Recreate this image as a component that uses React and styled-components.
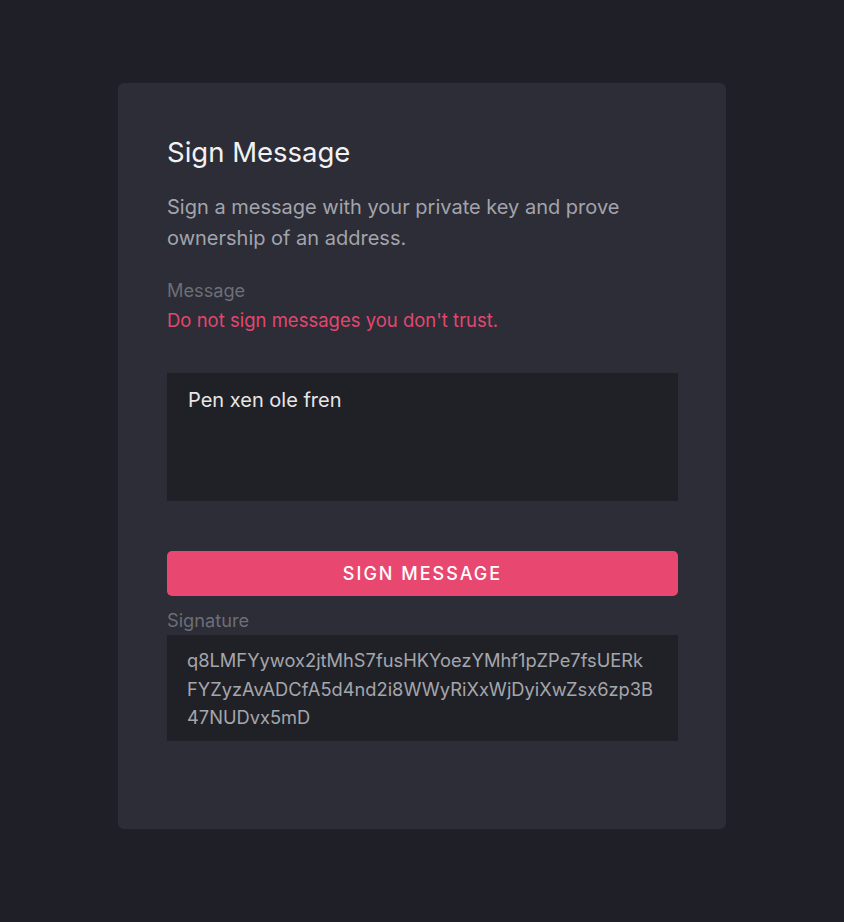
import styled, { createGlobalStyle } from 'styled-components';

const GlobalStyle = createGlobalStyle`
  html, body {
    margin: 0;
    padding: 0;
    background: #1f2027;
  }
  body {
    font-family: Inter, "Noto Sans", sans-serif;
  }
`;

const Page = styled.div`
  min-height: 922px;
  display: flex;
  justify-content: center;
  padding-top: 83px;
  box-sizing: border-box;
`;

const Card = styled.div`
  width: 608px;
  height: 746px;
  box-sizing: border-box;
  background: #2c2d36;
  border-radius: 6px;
  padding: 53px 48px 0 49px;
  display: flex;
  flex-direction: column;
`;

const Title = styled.h1`
  margin: 0;
  font-size: 27.5px;
  font-weight: 400;
  color: #f2f2f4;
  line-height: 32px;
`;

const Description = styled.p`
  margin: 23.5px 0 0;
  font-size: 20px;
  line-height: 31px;
  color: #a3a4ab;
`;

const Label = styled.div`
  font-size: 18.2px;
  line-height: 24px;
  color: #6d6e77;
  margin-top: ${(p) => p.$top || 0}px;
`;

const Warning = styled.div`
  font-size: 18.5px;
  line-height: 24px;
  color: #e2476f;
  margin-top: 6px;
`;

const MessageBox = styled.div`
  margin-top: 41px;
  height: 128px;
  background: #202127;
  padding: 14px 21px;
  box-sizing: border-box;
  font-size: 20px;
  line-height: 26px;
  color: #e6e6e8;
`;

const SignButton = styled.button`
  margin-top: 50px;
  height: 45px;
  border: none;
  border-radius: 5px;
  background: #e8486f;
  color: #ffffff;
  font-family: inherit;
  font-size: 18px;
  font-weight: 500;
  letter-spacing: 2px;
  text-transform: uppercase;
  cursor: pointer;
`;

const SignatureBox = styled.div`
  margin-top: 3px;
  background: #202127;
  padding: 11px 4px 9px 20px;
  font-size: 18.3px;
  line-height: 28.5px;
  color: #a5a6ac;
`;

const SigLine = styled.span`
  display: block;
  white-space: nowrap;
`;

const signatureLines = [
  'q8LMFYywox2jtMhS7fusHKYoezYMhf1pZPe7fsUERk',
  'FYZyzAvADCfA5d4nd2i8WWyRiXxWjDyiXwZsx6zp3B',
  '47NUDvx5mD',
];

export default function App() {
  return (
    <>
      <GlobalStyle />
      <Page>
        <Card>
          <Title>Sign Message</Title>
          <Description>
            Sign a message with your private key and prove ownership of an address.
          </Description>
          <Label $top={24.5}>Message</Label>
          <Warning>Do not sign messages you don't trust.</Warning>
          <MessageBox>Pen xen ole fren</MessageBox>
          <SignButton>Sign Message</SignButton>
          <Label $top={12}>Signature</Label>
          <SignatureBox>
            {signatureLines.map((line) => (
              <SigLine key={line}>{line}</SigLine>
            ))}
          </SignatureBox>
        </Card>
      </Page>
    </>
  );
}
